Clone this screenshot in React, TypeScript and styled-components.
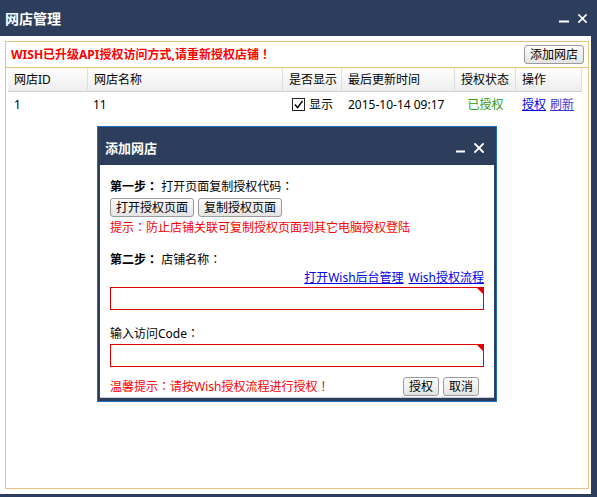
import React from "react";
import styled, { createGlobalStyle } from "styled-components";

const NAVY = "#2d3e5d";
const GOLD = "#e6c27a";
const RED = "#f00";

const GlobalStyle = createGlobalStyle`
	html, body {
		margin: 0;
		padding: 0;
		background: ${NAVY};
	}
	body {
		font-family: "Noto Sans", "Noto Sans CJK SC", sans-serif;
		font-size: 12px;
		color: #000;
	}
`;

// full-width marks centred in their box, as the original font draws them
const P = styled.span`
	font-family: "Noto Sans CJK JP", sans-serif;
	line-height: 0;
`;

const Window = styled.div`
	width: 597px;
	height: 497px;
	display: flex;
	flex-direction: column;
	background: ${NAVY};
	overflow: hidden;
`;

const TitleBar = styled.div<{ $height: number; $padTop?: number }>`
	height: ${(p) => p.$height}px;
	flex: none;
	display: flex;
	align-items: center;
	justify-content: space-between;
	padding: ${(p) => p.$padTop || 0}px 10px 0 5px;
	box-sizing: border-box;
	background: ${NAVY};
`;

const Title = styled.span<{ $size: number }>`
	color: #fff;
	font-weight: bold;
	font-size: ${(p) => p.$size}px;
	line-height: 18px;
`;

const Controls = styled.div<{ $gap: number }>`
	display: flex;
	align-items: flex-end;
	gap: ${(p) => p.$gap}px;
`;

const Body = styled.div`
	position: relative;
	width: 591px;
	height: 458px;
	box-sizing: border-box;
	padding: 5px 2px 5px 5px;
	background: #fff;
`;

const Panel = styled.div`
	height: 100%;
	box-sizing: border-box;
	border: 1px solid ${GOLD};
	display: flex;
	flex-direction: column;
`;

const NoticeBar = styled.div`
	height: 25px;
	flex: none;
	display: flex;
	align-items: center;
	justify-content: space-between;
	padding: 0 4px 0 5px;
	border-bottom: 1px solid ${GOLD};
`;

const Notice = styled.span`
	color: ${RED};
	font-weight: bold;
	line-height: 16px;
`;

const Button = styled.button`
	height: 19px;
	padding: 0 5px;
	font-family: inherit;
	font-size: 12px;
	line-height: 17px;
	color: #000;
	border: 1px solid #9b9b9b;
	border-radius: 3px;
	background: linear-gradient(#fdfdfd, #e3e3e3);
	cursor: pointer;
`;

const Table = styled.div`
	width: 574px;
	margin-left: 2px;
	display: grid;
	grid-template-columns: 80px 195px 59px 113px 61px 66px;
`;

const HeadCell = styled.div<{ $center?: boolean }>`
	height: 24px;
	display: flex;
	align-items: center;
	justify-content: ${(p) => (p.$center ? "center" : "flex-start")};
	padding-left: ${(p) => (p.$center ? 0 : 6)}px;
	background: linear-gradient(#ffffff, #eeeeee);
	border-bottom: 1px solid #cfcfcf;
	border-right: 1px solid #dedede;
	box-sizing: border-box;
	line-height: 16px;
`;

const Cell = styled.div<{ $center?: boolean; $pad?: number }>`
	height: 25px;
	display: flex;
	align-items: center;
	gap: 4px;
	justify-content: ${(p) => (p.$center ? "center" : "flex-start")};
	padding-left: ${(p) => (p.$center ? 0 : p.$pad ?? 6)}px;
	line-height: 16px;
`;

const Granted = styled.span`
	color: #2f9a12;
`;

const Link = styled.a<{ $light?: boolean }>`
	color: ${(p) => (p.$light ? "#3a3ad6" : "#0000ee")};
	text-decoration: underline;
	cursor: pointer;
`;

const CheckBox = styled.span`
	width: 11px;
	height: 11px;
	border: 1px solid #222;
	background: #fff;
	display: inline-flex;
	align-items: center;
	justify-content: center;
	svg {
		width: 9px;
		height: 9px;
	}
`;

const Dialog = styled.div`
	position: absolute;
	left: 97px;
	top: 90px;
	width: 400px;
	height: 276px;
	box-sizing: border-box;
	border: 1px solid #1f6cc2;
	background: ${NAVY};
	padding: 0 2px 3px 2px;
	display: flex;
	flex-direction: column;
`;

const DialogBody = styled.div`
	flex: 1;
	background: #fff;
	padding: 14px 10px 0 10px;
	border-bottom: 1px solid #c9ccd2;
	display: flex;
	flex-direction: column;
`;

const Line = styled.div<{ $top?: number; $color?: string; $right?: boolean }>`
	height: 16px;
	line-height: 16px;
	margin-top: ${(p) => p.$top || 0}px;
	color: ${(p) => p.$color || "#000"};
	display: flex;
	gap: 5px;
	justify-content: ${(p) => (p.$right ? "flex-end" : "flex-start")};
`;

const Strong = styled.b`
	font-weight: bold;
`;

const ButtonRow = styled.div<{ $top: number }>`
	margin-top: ${(p) => p.$top}px;
	display: flex;
	gap: 4px;
`;

const Field = styled.div<{ $top: number }>`
	position: relative;
	margin-top: ${(p) => p.$top}px;
	height: 23px;
	&::after {
		content: "";
		position: absolute;
		right: 1px;
		top: 1px;
		border-style: solid;
		border-width: 0 6px 6px 0;
		border-color: transparent #e00000 transparent transparent;
	}
`;

const Input = styled.input`
	width: 100%;
	height: 100%;
	box-sizing: border-box;
	border: 1px solid #e00000;
	outline: none;
	padding: 0 4px;
	font-family: inherit;
	font-size: 12px;
`;

const Footer = styled.div`
	margin-top: 10px;
	height: 19px;
	display: flex;
	align-items: center;
	justify-content: space-between;
	padding-right: 5px;
`;

const Hint = styled.span`
	color: ${RED};
	line-height: 16px;
`;

const Minimize = ({ w }: { w: number }) => (
	<svg width={w} height={3} viewBox={`0 0 ${w} 3`}>
		<rect x="0" y="0.5" width={w} height="2" fill="#fff" />
	</svg>
);

const Close = ({ s }: { s: number }) => (
	<svg width={s} height={s} viewBox="0 0 10 10">
		<path d="M1 1 L9 9 M9 1 L1 9" stroke="#fff" strokeWidth="1.8" strokeLinecap="square" />
	</svg>
);

function App() {
	return (
		<>
			<GlobalStyle />
			<Window>
				<TitleBar $height={36} $padTop={1}>
					<Title $size={14}>网店管理</Title>
					<Controls $gap={9}>
						<Minimize w={10} />
						<Close s={9} />
					</Controls>
				</TitleBar>
				<Body>
					<Panel>
						<NoticeBar>
							<Notice>
								WISH已升级API授权访问方式,请重新授权店铺<P>！</P>
							</Notice>
							<Button>添加网店</Button>
						</NoticeBar>
						<Table>
							<HeadCell>网店ID</HeadCell>
							<HeadCell>网店名称</HeadCell>
							<HeadCell>是否显示</HeadCell>
							<HeadCell>最后更新时间</HeadCell>
							<HeadCell $center>授权状态</HeadCell>
							<HeadCell>操作</HeadCell>

							<Cell>1</Cell>
							<Cell $pad={5}>11</Cell>
							<Cell $pad={9}>
								<CheckBox>
									<svg viewBox="0 0 10 10">
										<path d="M1 5 L4 8.5 L9.5 1" fill="none" stroke="#000" strokeWidth="1.6" />
									</svg>
								</CheckBox>
								显示
							</Cell>
							<Cell>2015-10-14 09:17</Cell>
							<Cell $center>
								<Granted>已授权</Granted>
							</Cell>
							<Cell $pad={6}>
								<Link>授权</Link>
								<Link $light>刷新</Link>
							</Cell>
						</Table>
					</Panel>

					<Dialog>
						<TitleBar $height={38} $padTop={4}>
							<Title $size={13}>添加网店</Title>
							<Controls $gap={9}>
								<Minimize w={9} />
								<Close s={10} />
							</Controls>
						</TitleBar>
						<DialogBody>
							<Line>
								<span>
									<Strong>
										第一步<P>：</P>
									</Strong>{" "}
									打开页面复制授权代码<P>：</P>
								</span>
							</Line>
							<ButtonRow $top={3}>
								<Button>打开授权页面</Button>
								<Button>复制授权页面</Button>
							</ButtonRow>
							<Line $top={3} $color={RED}>
								<span>
									提示<P>：</P>防止店铺关联可复制授权页面到其它电脑授权登陆
								</span>
							</Line>
							<Line $top={16}>
								<span>
									<Strong>
										第二步<P>：</P>
									</Strong>{" "}
									店铺名称<P>：</P>
								</span>
							</Line>
							<Line $top={2} $right>
								<Link>打开Wish后台管理</Link>
								<Link>Wish授权流程</Link>
							</Line>
							<Field $top={1}>
								<Input />
							</Field>
							<Line $top={16}>
								<span>
									输入访问Code<P>：</P>
								</span>
							</Line>
							<Field $top={2}>
								<Input />
							</Field>
							<Footer>
								<Hint>
									温馨提示<P>：</P>请按Wish授权流程进行授权<P>！</P>
								</Hint>
								<ButtonRow $top={0}>
									<Button>授权</Button>
									<Button>取消</Button>
								</ButtonRow>
							</Footer>
						</DialogBody>
					</Dialog>
				</Body>
			</Window>
		</>
	);
}

export default App;
